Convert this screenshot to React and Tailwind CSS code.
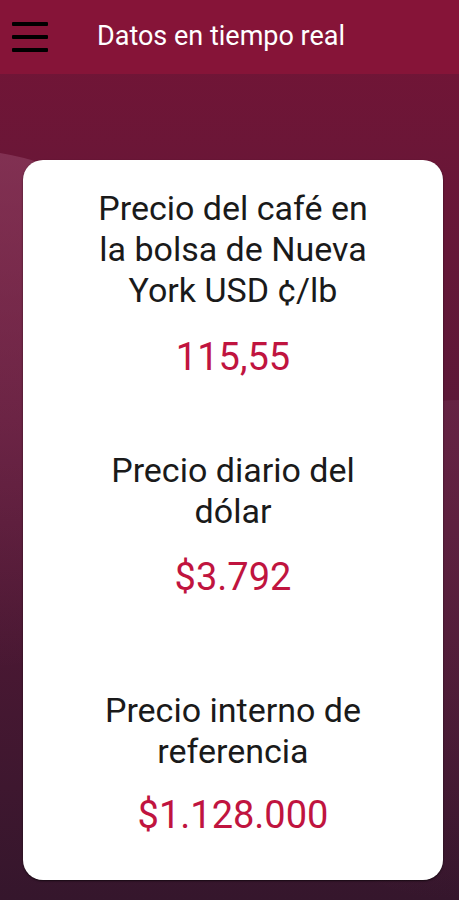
export default function App() {
  const font = { fontFamily: "Roboto, 'Noto Sans', sans-serif" };
  return (
    <div className="relative w-[459px] h-[900px] overflow-hidden bg-gradient-to-b from-[#741436] via-[#5a1838] to-[#35162c]" style={font}>
      {/* decorative waves */}
      <div className="absolute left-[-300px] top-[150px] w-[520px] h-[520px] rounded-full bg-gradient-to-b from-[#8b3c5e] to-transparent opacity-70"></div>
      <div className="absolute right-[-200px] top-[400px] w-[400px] h-[500px] rounded-full bg-gradient-to-b from-[#6a2a4a] to-transparent opacity-60"></div>
      <div className="relative flex flex-col h-full">
        <header className="h-[74px] shrink-0 bg-[#861438] flex items-center">
          <div className="w-[36px] ml-[12px] flex flex-col gap-[9px]">
            <span className="block h-[4px] bg-black rounded-[1px]"></span>
            <span className="block h-[4px] bg-black rounded-[1px]"></span>
            <span className="block h-[4px] bg-black rounded-[1px]"></span>
          </div>
          <h1 className="ml-[49px] text-white text-[27px] leading-none pb-[2px]">Datos en tiempo real</h1>
        </header>
        <div className="px-[23px] pt-[86px]">
          <div className="w-[420px] h-[720px] bg-white rounded-[20px] shadow-[0_1px_2px_rgba(0,0,0,0.6)] flex flex-col items-center text-center pt-[28px]">
            <p className="text-[34px] leading-[41px] text-[#1a1a1a] w-[300px]">Precio del café en la bolsa de Nueva York USD ¢/lb</p>
            <p className="mt-[24px] text-[38px] leading-[44px] text-[#c0143f]">115,55</p>
            <p className="mt-[71px] text-[34px] leading-[41px] text-[#1a1a1a] w-[300px]">Precio diario del dólar</p>
            <p className="mt-[23px] text-[38px] leading-[44px] text-[#c0143f]">$3.792</p>
            <p className="mt-[91px] text-[34px] leading-[41px] text-[#1a1a1a] w-[300px]">Precio interno de referencia</p>
            <p className="mt-[21px] text-[38px] leading-[44px] text-[#c0143f]">$1.128.000</p>
          </div>
        </div>
      </div>
    </div>
  );
}
